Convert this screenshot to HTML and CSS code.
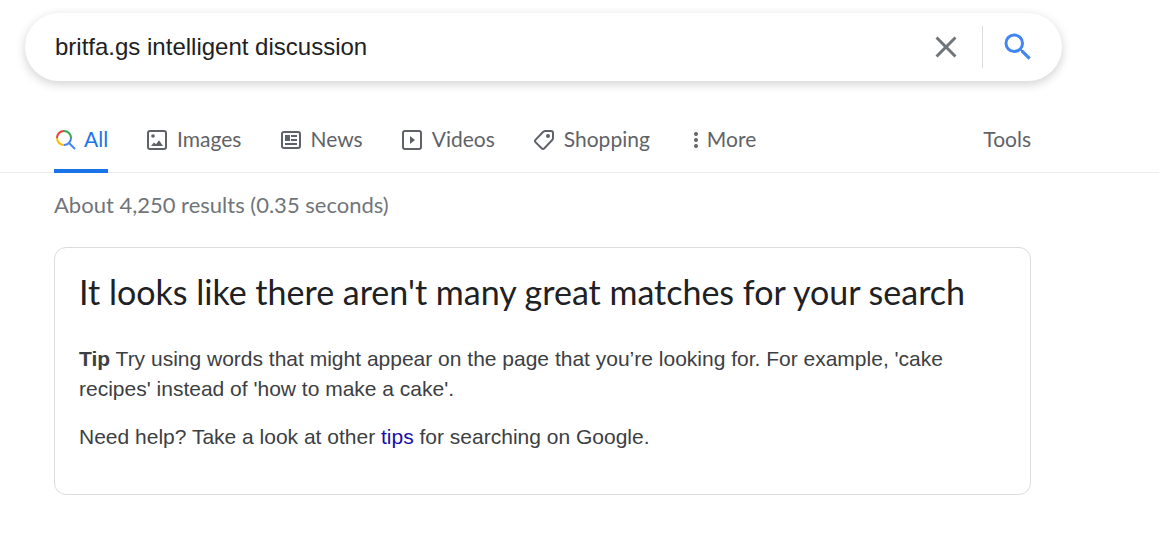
FILE: index.html
```html
<!DOCTYPE html>
<html lang="en">
<head>
    <meta charset="UTF-8">
    <meta name="viewport" content="width=device-width, initial-scale=1.0">
    <title>britfa.gs intelligent discussion - Google Search</title>
    <link rel="stylesheet" href="styles.css">
</head>
<body>

    <header>
        <form class="search-box" role="search">
            <input type="text" class="search-input" name="q" aria-label="Search" value="britfa.gs intelligent discussion" autocomplete="off" spellcheck="false">
            <button type="reset" class="icon-button" aria-label="Clear">
                <svg width="36" height="36" viewBox="0 0 24 24" fill="#70757a"><path d="M19 6.41L17.59 5 12 10.59 6.41 5 5 6.41 10.59 12 5 17.59 6.41 19 12 13.41 17.59 19 19 17.59 13.41 12z"/></svg>
            </button>
            <span class="divider"></span>
            <button type="submit" class="icon-button" aria-label="Search">
                <svg width="36" height="36" viewBox="0 0 24 24" fill="#4285f4"><path d="M15.5 14h-.79l-.28-.27A6.47 6.47 0 0 0 16 9.5 6.5 6.5 0 1 0 9.5 16c1.61 0 3.09-.59 4.23-1.57l.27.28v.79l5 4.99L20.49 19l-4.99-5zm-6 0C7.01 14 5 11.99 5 9.5S7.01 5 9.5 5 14 7.01 14 9.5 11.99 14 9.5 14z"/></svg>
            </button>
        </form>

        <nav class="nav-bar">
            <div class="nav-inner">
                <div class="tabs">
                    <a href="#" class="tab active" aria-current="page">
                        <svg width="22" height="22" viewBox="0 0 22 22" fill="none" stroke-width="2">
                            <path d="M3 9a7 7 0 0 1 7-7" stroke="#ea4335"/>
                            <path d="M10 2a7 7 0 0 1 7 7" stroke="#34a853"/>
                            <path d="M3 9a7 7 0 0 0 7 7" stroke="#fbbc04"/>
                            <path d="M10 16a7 7 0 0 0 7-7M15 14l6 6" stroke="#4285f4"/>
                        </svg>
                        <span>All</span>
                    </a>
                    <a href="#" class="tab">
                        <svg width="22" height="22" viewBox="0 0 22 22" fill="none" stroke="#5f6368" stroke-width="2">
                            <rect x="1" y="2" width="18" height="18" rx="2"/>
                            <circle cx="6" cy="7" r="1.8" fill="#5f6368" stroke="none"/>
                            <path d="M4 17l3-3.500 2 1.700 3-4 4 5.800z" fill="#5f6368" stroke="none"/>
                        </svg>
                        <span>Images</span>
                    </a>
                    <a href="#" class="tab">
                        <svg width="22" height="22" viewBox="0 0 22 22" fill="none" stroke="#5f6368" stroke-width="2">
                            <rect x="2" y="3" width="18" height="16" rx="2"/>
                            <path d="M5 6h5v6H5z" fill="#5f6368" stroke="none"/>
                            <path d="M11 7h6M11 11h6M5 15h12"/>
                        </svg>
                        <span>News</span>
                    </a>
                    <a href="#" class="tab">
                        <svg width="22" height="22" viewBox="0 0 22 22" fill="none" stroke="#5f6368" stroke-width="2">
                            <rect x="1" y="2" width="18" height="18" rx="2"/>
                            <path d="M8 7v8l5-4z" fill="#5f6368" stroke="none"/>
                        </svg>
                        <span>Videos</span>
                    </a>
                    <a href="#" class="tab">
                        <svg width="22" height="22" viewBox="0 0 22 22" fill="none" stroke="#5f6368" stroke-width="2">
                            <path d="M11 2h6a2 2 0 0 1 2 2v5a3 3 0 0 1-.8 2L10.400 19.300a2 2 0 0 1-2.800 0L1.700 13.400a2 2 0 0 1 0-2.800L9 3a3 3 0 0 1 2-1z"/>
                            <circle cx="14" cy="7" r="2" fill="#5f6368" stroke="none"/>
                        </svg>
                        <span>Shopping</span>
                    </a>
                    <button type="button" class="tab more">
                        <svg width="6" height="22" viewBox="0 0 6 22" fill="#5f6368">
                            <circle cx="3" cy="5" r="2"/>
                            <circle cx="3" cy="11" r="2"/>
                            <circle cx="3" cy="17" r="2"/>
                        </svg>
                        <span>More</span>
                    </button>
                </div>
                <button type="button" class="tab">Tools</button>
            </div>
        </nav>
    </header>

    <main>
        <p class="result-stats">About 4,250 results (0.35 seconds)</p>

        <section class="card">
            <h1>It looks like there aren't many great matches for your search</h1>
            <p><b>Tip</b> Try using words that might appear on the page that you’re looking for. For example, 'cake recipes' instead of 'how to make a cake'.</p>
            <p>Need help? Take a look at other <a href="#">tips</a> for searching on Google.</p>
        </section>
    </main>

</body>
</html>
```
FILE: styles.css
```css
* {
    box-sizing: border-box;
}

body {
    margin: 0;
    font-family: "Liberation Sans", Arial, sans-serif;
    background: #fff;
    color: #3c4043;
}

button {
    border: none;
    background: none;
    padding: 0;
    cursor: pointer;
}

svg {
    display: block;
    flex-shrink: 0;
}

/* Search box */
.search-box {
    display: flex;
    align-items: center;
    max-width: 1037px;
    height: 68px;
    margin: 13px 24px 0 25px;
    padding: 0 26px 0 30px;
    border-radius: 34px;
    background: #fff;
    box-shadow: 0 3px 8px 1px rgba(64, 60, 67, 0.2);
}

.search-input {
    flex: 1;
    min-width: 0;
    border: none;
    outline: none;
    padding: 0;
    background: transparent;
    font-family: inherit;
    font-size: 24px;
    color: #202124;
}

.divider {
    width: 1px;
    height: 42px;
    margin: 0 17px 0 18px;
    background: #dadce0;
}

/* Tabs */
.nav-bar {
    margin-top: 24px;
    border-bottom: 1px solid #ebebeb;
}

.nav-inner {
    display: flex;
    justify-content: space-between;
    max-width: 1031px;
    height: 67px;
    padding-left: 54px;
}

.tabs {
    display: flex;
    gap: 39px;
}

.tab {
    display: flex;
    align-items: center;
    gap: 8px;
    height: 68px;
    padding-bottom: 2px;
    font-family: Lato, sans-serif;
    font-size: 21px;
    color: #5f6368;
    text-decoration: none;
}

.tab svg {
    margin-top: 3px;
}

.tab.active {
    padding: 2px 0 0;
    border-bottom: 4px solid #1a73e8;
    color: #1a73e8;
}

.tab.more {
    margin-left: 4px;
}

/* Results */
main {
    max-width: 1031px;
    padding-left: 54px;
}

.result-stats {
    margin: 18px 0 28px;
    font-family: Lato, sans-serif;
    font-size: 22px;
    line-height: 28px;
    color: #70757a;
}

.card {
    padding: 23px 24px 42px;
    border: 1px solid #dadce0;
    border-radius: 12px;
}

.card h1 {
    margin: 0 0 31px;
    font-family: Lato, sans-serif;
    font-size: 34px;
    font-weight: normal;
    line-height: 42px;
    color: #202124;
}

.card p {
    margin: 0 0 18px;
    font-size: 21px;
    line-height: 30px;
}

.card p:last-child {
    margin-bottom: 0;
}

.card a {
    color: #1a0dab;
    text-decoration: none;
}
```
